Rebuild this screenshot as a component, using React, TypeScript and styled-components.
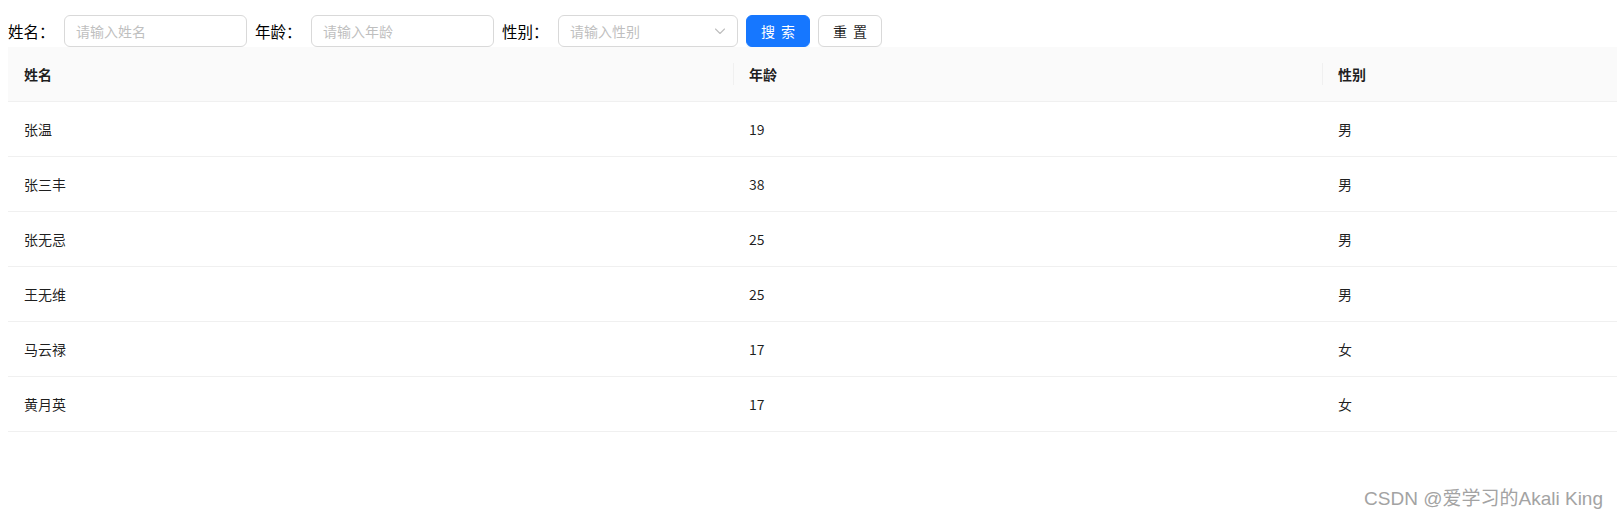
import React from 'react';
import styled, { createGlobalStyle } from 'styled-components';

const GlobalStyle = createGlobalStyle`
  html, body {
    margin: 0;
    padding: 0;
    background: #fff;
    overflow: hidden;
  }
  body {
    font-family: "Noto Sans CJK SC", "Noto Sans", "Liberation Sans", sans-serif;
    color: rgba(0, 0, 0, 0.88);
  }
  * { box-sizing: border-box; }
`;

const Page = styled.div`
  padding: 15px 0 0 8px;
  min-height: 520px;
  position: relative;
`;

const SearchBar = styled.form`
  display: flex;
  align-items: center;
  gap: 8px;
  height: 32px;
`;

const Field = styled.div`
  display: flex;
  align-items: center;
`;

const Label = styled.label`
  width: 56px;
  font-size: 15.5px;
  line-height: 32px;
  color: #000;
  white-space: nowrap;
`;

const Input = styled.input<{ $w?: number }>`
  width: ${(p) => p.$w ?? 183}px;
  height: 32px;
  padding: 0 11px;
  border: 1px solid #d9d9d9;
  border-radius: 6px;
  font-family: inherit;
  font-size: 14px;
  color: rgba(0, 0, 0, 0.88);
  outline: none;
  background: #fff;

  &::placeholder {
    color: #bfbfbf;
  }
`;

const SelectBox = styled.div`
  width: 180px;
  height: 32px;
  padding: 0 11px;
  border: 1px solid #d9d9d9;
  border-radius: 6px;
  display: flex;
  align-items: center;
  justify-content: space-between;
  font-size: 14px;
  color: #bfbfbf;
`;

const Button = styled.button<{ $primary?: boolean }>`
  width: 64px;
  height: 32px;
  border-radius: 6px;
  font-family: inherit;
  font-size: 14px;
  cursor: pointer;
  padding: 0;
  word-spacing: 3px;
  border: 1px solid ${(p) => (p.$primary ? '#1677ff' : '#d9d9d9')};
  background: ${(p) => (p.$primary ? '#1677ff' : '#fff')};
  color: ${(p) => (p.$primary ? '#fff' : 'rgba(0, 0, 0, 0.88)')};
  box-shadow: ${(p) => (p.$primary ? '0 2px 0 rgba(5, 145, 255, 0.1)' : '0 2px 0 rgba(0, 0, 0, 0.02)')};
`;

const Table = styled.table`
  width: calc(100% + 8px);
  table-layout: fixed;
  border-collapse: collapse;
  font-size: 14px;
`;

const HeadCell = styled.th<{ $divider?: boolean }>`
  position: relative;
  text-align: left;
  padding: 16px;
  line-height: 22px;
  font-weight: 600;
  background: #fafafa;
  border-bottom: 1px solid #f0f0f0;
  color: rgba(0, 0, 0, 0.88);

  &::before {
    content: "";
    display: ${(p) => (p.$divider ? 'block' : 'none')};
    position: absolute;
    top: 50%;
    left: 0;
    width: 1px;
    height: 22px;
    transform: translateY(-50%);
    background: #f0f0f0;
  }
`;

const Cell = styled.td`
  padding: 16px;
  line-height: 22px;
  border-bottom: 1px solid #f0f0f0;
  color: rgba(0, 0, 0, 0.88);
`;

const Watermark = styled.div`
  position: absolute;
  right: 14px;
  bottom: 10px;
  font-family: "Liberation Sans", "Noto Sans CJK SC", sans-serif;
  font-size: 19px;
  color: #a3a3a3;
  text-shadow: 0 0 1px #fff;
  pointer-events: none;
`;

const Chevron = () => (
  <svg width="12" height="12" viewBox="0 0 12 12" fill="none">
    <path d="M1.5 4l4.5 4.5L10.5 4" stroke="#bfbfbf" strokeWidth="1.1" strokeLinecap="round" strokeLinejoin="round" />
  </svg>
);

const rows = [
  { name: '张温', age: 19, sex: '男' },
  { name: '张三丰', age: 38, sex: '男' },
  { name: '张无忌', age: 25, sex: '男' },
  { name: '王无维', age: 25, sex: '男' },
  { name: '马云禄', age: 17, sex: '女' },
  { name: '黄月英', age: 17, sex: '女' },
];

const App = () => {
  return (
    <Page>
      <GlobalStyle />
      <SearchBar onSubmit={(e) => e.preventDefault()}>
        <Field>
          <Label>姓名：</Label>
          <Input placeholder="请输入姓名" />
        </Field>
        <Field>
          <Label>年龄：</Label>
          <Input placeholder="请输入年龄" />
        </Field>
        <Field>
          <Label>性别：</Label>
          <SelectBox>
            <span>请输入性别</span>
            <Chevron />
          </SelectBox>
        </Field>
        <Button $primary type="submit">搜 索</Button>
        <Button type="button">重 置</Button>
      </SearchBar>
      <Table>
        <colgroup>
          <col style={{ width: 725 }} />
          <col style={{ width: 589 }} />
          <col />
        </colgroup>
        <thead>
          <tr>
            <HeadCell>姓名</HeadCell>
            <HeadCell $divider>年龄</HeadCell>
            <HeadCell $divider>性别</HeadCell>
          </tr>
        </thead>
        <tbody>
          {rows.map((r) => (
            <tr key={r.name}>
              <Cell>{r.name}</Cell>
              <Cell>{r.age}</Cell>
              <Cell>{r.sex}</Cell>
            </tr>
          ))}
        </tbody>
      </Table>
      <Watermark>CSDN @爱学习的Akali King</Watermark>
    </Page>
  );
};

export default App;
